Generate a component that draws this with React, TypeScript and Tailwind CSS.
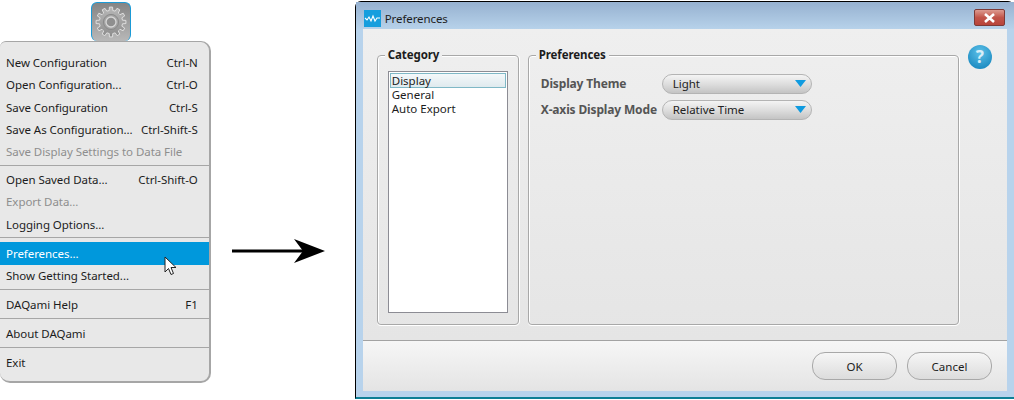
const font = "[font-family:'Noto_Sans','Open_Sans',sans-serif]";

type Row = { t: string; k?: string; off?: boolean; hi?: boolean };
const groups: Row[][] = [
  [
    { t: "New Configuration", k: "Ctrl-N" },
    { t: "Open Configuration...", k: "Ctrl-O" },
    { t: "Save Configuration", k: "Ctrl-S" },
    { t: "Save As Configuration...", k: "Ctrl-Shift-S" },
    { t: "Save Display Settings to Data File", off: true },
  ],
  [
    { t: "Open Saved Data...", k: "Ctrl-Shift-O" },
    { t: "Export Data...", off: true },
    { t: "Logging Options..." },
  ],
  [{ t: "Preferences...", hi: true }, { t: "Show Getting Started..." }],
  [{ t: "DAQami Help", k: "F1" }],
  [{ t: "About DAQami" }],
  [{ t: "Exit" }],
];
const groupPad = ["pb-[2.5px]", "border-t border-[#a6a6a6] pt-[2px] pb-[2px]", "border-t border-[#a6a6a6] pt-[4px] pb-[2px]", "border-t border-[#a6a6a6] pt-[4px] pb-[2px]", "border-t border-[#a6a6a6] pt-[3px] pb-[2px]", "border-t border-[#a6a6a6] pt-[4px]"];

function gearPath() {
  const n = 12;
  const pts: string[] = [];
  const R = 15, r = 11.6;
  for (let i = 0; i < n; i++) {
    const a = (i * 2 * Math.PI) / n;
    const w = (2 * Math.PI) / n;
    for (const [rad, da] of [[r, -0.5 * w], [r, -0.3 * w], [R, -0.2 * w], [R, 0.2 * w], [r, 0.3 * w]] as const) {
      const t = a + da;
      pts.push(`${(16 + rad * Math.sin(t)).toFixed(2)} ${(16 - rad * Math.cos(t)).toFixed(2)}`);
    }
  }
  return "M" + pts.join("L") + "Z";
}

function Gear() {
  return (
    <svg width="32" height="32" viewBox="0 0 32 32">
      <defs>
        <linearGradient id="g" x1="0" y1="0" x2="0" y2="1">
          <stop offset="0" stopColor="#b8b8b8" />
          <stop offset="1" stopColor="#8c8c8c" />
        </linearGradient>
      </defs>
      <path d={gearPath()} fill="url(#g)" stroke="#dedede" strokeWidth="1" strokeLinejoin="round" />
      <circle cx="16" cy="16" r="7.6" fill="#a4a4a4" stroke="#8a8a8a" strokeWidth="1" />
      <circle cx="16" cy="16" r="5" fill="#8f8f8f" stroke="#d8d8d8" strokeWidth="1.3" />
    </svg>
  );
}

function Menu() {
  return (
    <div className="flex w-[211px] flex-col pt-[2px]">
      <div className="self-center mr-[-11px] flex h-[39px] w-[40px] items-center justify-center rounded-[6px] border border-[#1b9ad6] border-b-0 bg-gradient-to-b from-[#858585] to-[#b8b8b8]">
        <Gear />
      </div>
      <div className="flex h-[342px] flex-col rounded-[10px] rounded-tl-[6px] border-t border-r-2 border-b-2 border-[#a6a6a6] bg-[#e8e8e8] pt-[9.5px] text-[11.5px] tracking-[-0.05px] text-[#1c1c1c]">
        {groups.map((g, i) => (
          <div key={i} className={groupPad[i]}>
            {g.map((r) => (
              <div key={r.t} className={`flex h-[22.3px] items-center justify-between pl-[6px] pr-[11px] ${r.hi ? "bg-[#0098dc] text-white" : ""} ${r.off ? "text-[#8e8e8e]" : ""}`}>
                <span className="whitespace-nowrap">{r.t}</span>
                {r.k && <span className="whitespace-nowrap">{r.k}</span>}
              </div>
            ))}
          </div>
        ))}
      </div>
    </div>
  );
}

function Select({ v }: { v: string }) {
  return (
    <div className="flex h-[20px] w-[150px] items-center justify-between rounded-full border border-[#b4b4b4] bg-gradient-to-b from-[#f4f4f4] via-[#dedede] to-[#c4c4c4] pb-px pl-[10px] pr-[5px] text-[11.5px] font-normal tracking-[-0.05px] text-[#222]">
      <span>{v}</span>
      <svg width="11" height="7" viewBox="0 0 11 7"><path d="M0 0H11L5.5 7Z" fill="#0f9be0" /></svg>
    </div>
  );
}

function Btn({ t }: { t: string }) {
  return (
    <div className="flex h-[28px] w-[85px] items-center justify-center rounded-[13px] border border-[#a8a8a8] bg-gradient-to-b from-[#f6f6f6] to-[#dcdcdc] text-[11.5px] text-[#1c1c1c]">
      {t}
    </div>
  );
}

const fs = "rounded-[4px] border border-[#a8a8a8] shadow-[0_1px_0_#fff,1px_0_0_#fff,inset_0_1px_0_#fff,inset_1px_0_0_#fff]";
const lg = "bg-[#eeeeee] px-[3px] text-[11.5px] font-bold leading-[14px] tracking-[-0.1px] text-[#1c1c1c]";

function Dialog() {
  return (
    <div className="ml-[30px] mt-px flex h-[398px] w-[660px] flex-col rounded-t-[6px] border border-b-2 border-r-0 border-black border-b-[#0e7f95] bg-[#b8d3ec]">
      <div className="flex h-[28px] items-center bg-gradient-to-b from-[#96b1d0] to-[#b7d2ea] pl-[8px] pr-[9px] pt-[6px] text-[11.5px] tracking-[-0.1px] text-[#1e1e1e]">
        <svg width="17" height="17" viewBox="0 0 17 17" className="mr-[4px]">
          <rect width="17" height="17" fill="#159ede" />
          <path d="M1 8l2 2 2-3 2 4 2-5 2 5 2-3h3" fill="none" stroke="#fff" strokeWidth="1.1" />
        </svg>
        <span>Preferences</span>
        <div className="ml-auto mt-[-2px] flex h-[17px] w-[31px] items-center justify-center rounded-[2px] border border-[#7d3a36] bg-gradient-to-b from-[#dc9a90] via-[#c1554a] to-[#b8443a]">
          <svg width="13" height="10" viewBox="0 0 13 10"><path d="M2 1l9 8M11 1l-9 8" stroke="#fff" strokeWidth="2.6" /></svg>
        </div>
      </div>
      <div className="mx-[7px] flex flex-1 flex-col">
        <div className="flex h-[311px] bg-gradient-to-b from-[#efefef] to-[#e5e5e5] pl-[14px] pt-[19px]">
          <fieldset className={`h-[277px] w-[142px] px-[10px] ${fs}`}>
            <legend className={`ml-[-3px] ${lg}`}>Category</legend>
            <div className="mt-[9px] h-[242px] border border-[#8c8c94] bg-white p-px text-[11.5px] leading-[14px] text-[#1c1c1c]">
              <div className="h-[15px] border border-[#7fb8c6] bg-gradient-to-b from-[#f4f8fa] to-[#dfeaee] pl-px leading-[13px]">Display</div>
              <div className="pl-[2px]">General</div>
              <div className="pl-[2px]">Auto Export</div>
            </div>
          </fieldset>
          <fieldset className={`ml-[9px] h-[277px] w-[431px] pl-[12px] ${fs}`}>
            <legend className={`ml-[-5px] ${lg}`}>Preferences</legend>
            <div className="mt-[12px] grid grid-cols-[121px_150px] gap-y-[6px] text-[12px] font-bold tracking-[-0.15px] text-[#555]">
              <div className="flex items-center">Display Theme</div>
              <Select v="Light" />
              <div className="flex items-center whitespace-nowrap">X-axis Display Mode</div>
              <Select v="Relative Time" />
            </div>
          </fieldset>
          <div className="ml-[9px] mt-[-3px] flex h-[24px] w-[24px] items-center justify-center rounded-full bg-[radial-gradient(circle_at_50%_30%,#5cc0e8,#0d7eb8)] text-[17px] font-bold text-[#d8eef8]">?</div>
        </div>
        <div className="flex h-[51px] items-center justify-end gap-[10px] border-t border-[#a2a2a2] bg-gradient-to-b from-[#f6f6f6] to-[#e4e4e4] pr-[15px]">
          <Btn t="OK" />
          <Btn t="Cancel" />
        </div>
      </div>
      <div className="h-[6px]" />
    </div>
  );
}

export default function App() {
  return (
    <div className={`relative flex h-[400px] w-[1014px] overflow-hidden bg-white ${font}`}>
      <Menu />
      <div className="ml-[21px] flex w-[93px] items-start pt-[239px]">
        <svg width="93" height="24" viewBox="0 0 93 24">
          <path d="M0 10.5H76V13.5H0Z" fill="#000" />
          <path d="M93 12L62 0L71 12L62 24Z" fill="#000" />
        </svg>
      </div>
      <Dialog />
      <svg width="14" height="20" viewBox="0 0 14 20" className="absolute left-[164px] top-[256px]">
        <path d="M1 1V16L4.5 12.5L7 18.5L9.5 17.5L7 11.5H12Z" fill="#fff" stroke="#222" strokeWidth="1" />
      </svg>
    </div>
  );
}
